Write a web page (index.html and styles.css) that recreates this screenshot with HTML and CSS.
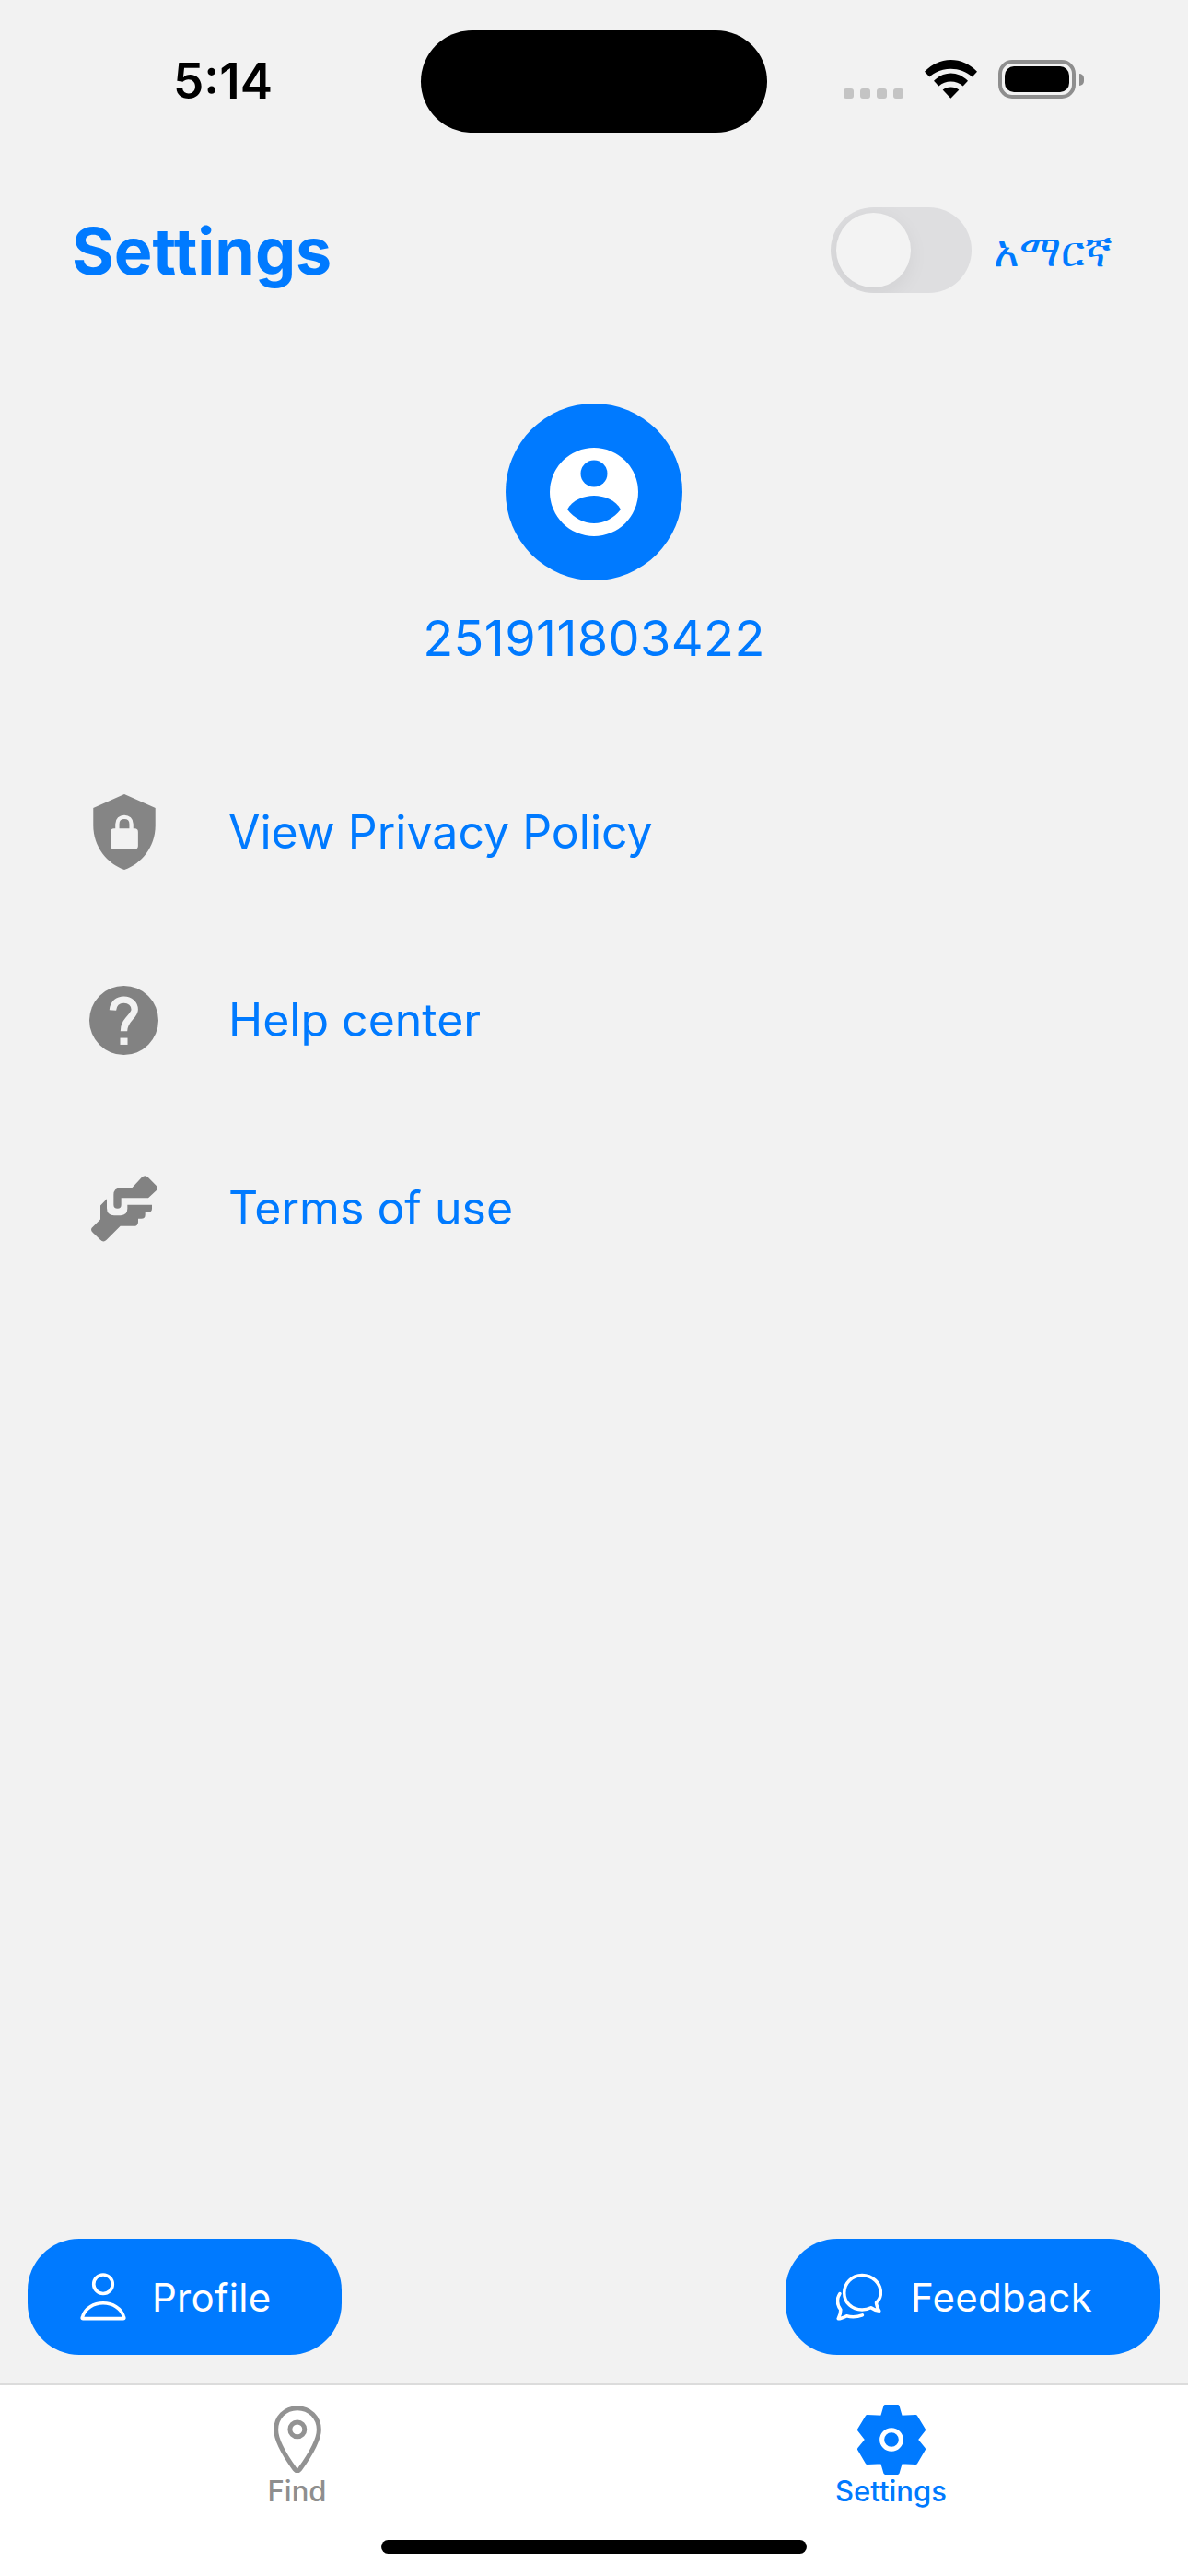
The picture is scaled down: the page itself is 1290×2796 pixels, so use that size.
FILE: index.html
```html
<!DOCTYPE html>
<html>
<head>
    <title>Settings</title>
    <link rel="stylesheet" href="styles.css">
</head>
<body>
    <div class="screen">
        <div class="status-bar">
            <span class="time">5:14</span>
            <div class="island"></div>
            <div class="status-icons">
                <div class="signal"><i></i><i></i><i></i><i></i></div>
                <svg class="wifi" viewBox="372 75 171 125">
                    <path d="M372 113C420 62 495 62 543 113L527 130C490 95 425 95 388 130Z"/>
                    <path d="M402 143C435 110 480 110 513 143L497 160C475 140 440 140 418 160Z"/>
                    <path d="M431 172C445 160 470 160 484 172L457 200Z"/>
                </svg>
                <div class="battery"><div class="battery-level"></div></div>
                <div class="battery-nub"></div>
            </div>
        </div>

        <div class="header">
            <h1 class="title">Settings</h1>
            <div class="lang">
                <div class="toggle"><div class="knob"></div></div>
                <span class="lang-label">አማርኛ</span>
            </div>
        </div>

        <div class="account">
            <svg class="avatar" viewBox="0 0 192 192">
                <circle cx="96" cy="96" r="96" fill="#007aff"/>
                <circle cx="96" cy="96" r="48" fill="#fff"/>
                <circle cx="96" cy="76" r="14.5" fill="#007aff"/>
                <path d="M67 115C72 105 85 100 96 100C107 100 120 105 125 115C118 124 107 130 96 130C85 130 74 124 67 115Z" fill="#007aff"/>
            </svg>
            <div class="phone">251911803422</div>
        </div>

        <div class="menu">
            <div class="menu-row">
                <div class="menu-icon">
                    <svg class="icon-shield" viewBox="123 92 204 248">
                        <path d="M225 92L327 137V195C327 265 280 322 225 340C170 322 123 265 123 195V137Z" fill="#858585"/>
                        <path d="M202 207V190C202 176 212 167 225 167C238 167 248 176 248 190V207" fill="none" stroke="#f2f2f2" stroke-width="13"/>
                        <rect x="180" y="205" width="90" height="67" rx="11" fill="#f2f2f2"/>
                    </svg>
                </div>
                <span class="menu-text">View Privacy Policy</span>
            </div>
            <div class="menu-row">
                <div class="menu-icon">
                    <svg class="icon-help" viewBox="113 86 224 224">
                        <circle cx="225" cy="198" r="112" fill="#828282"/>
                        <path d="M189 165C191 142 207 131 225 131C245 131 260 145 260 163C260 185 225 195 225 233" fill="none" stroke="#f2f2f2" stroke-width="22"/>
                        <rect x="213" y="255" width="24" height="22" fill="#f2f2f2"/>
                    </svg>
                </div>
                <span class="menu-text">Help center</span>
            </div>
            <div class="menu-row">
                <div class="menu-icon">
                    <svg class="icon-terms" viewBox="117 700 216 218" fill="#828282">
                        <path d="M250 742L282 708Q292 698 302 708L328 734Q338 744 328 752L303 775H215V798Q215 810 203 810Q190 810 190 798V765Q190 743 212 743Z"/>
                        <path d="M122 870L147 845V800L168 778V808Q168 832 192 832H213Q235 832 235 810V798H315V810Q315 822 303 822H293V830Q293 843 280 843H270V853Q270 867 255 867H212L167 912Q157 922 147 912L122 888Q112 878 122 870Z"/>
                    </svg>
                </div>
                <span class="menu-text">Terms of use</span>
            </div>
        </div>

        <div class="spacer"></div>

        <div class="actions">
            <div class="action action-profile">
                <svg class="action-icon" viewBox="260 200 146 157" fill="none" stroke="#fff" stroke-width="11">
                    <circle cx="333" cy="237" r="31"/>
                    <path d="M267 350C262 350 265 345 266 342C274 316 302 299 333 299C364 299 392 316 400 342C401 345 404 350 399 350Z" stroke-linejoin="round"/>
                </svg>
                <span>Profile</span>
            </div>
            <div class="action action-feedback">
                <svg class="action-icon" viewBox="235 200 155 157" fill="none" stroke="#fff" stroke-width="11" stroke-linejoin="round" stroke-linecap="round">
                    <path d="M322 206C288 206 262 232 262 265C262 298 288 322 322 322C333 322 344 319 352 315C362 322 372 325 380 326C374 316 370 306 370 298C380 288 385 277 385 265C385 232 357 206 322 206Z"/>
                    <path d="M247 268C236 285 238 305 250 322C250 333 247 343 242 352C252 352 262 347 270 343C285 347 305 347 323 340"/>
                </svg>
                <span>Feedback</span>
            </div>
        </div>

        <div class="tab-bar">
            <div class="tabs">
                <div class="tab">
                    <svg class="tab-icon-find" viewBox="888 633 157 220" fill="none" stroke="#929292" stroke-width="15">
                        <path d="M966 641C925 641 896 672 896 712C896 750 935 810 958 842Q966 852 974 842C997 810 1037 750 1037 712C1037 672 1007 641 966 641Z"/>
                        <circle cx="966" cy="711" r="24"/>
                    </svg>
                    <span class="tab-label">Find</span>
                </div>
                <div class="tab tab-active">
                    <svg class="tab-icon-gear" viewBox="300 630 222 228">
                        <path d="M391 636H431L441 671L490 669L516 712L491 744L516 775L490 819L441 817L431 852H391L381 817L332 819L306 775L331 744L306 712L332 669L381 671Z" fill="#007aff" stroke="#007aff" stroke-width="12" stroke-linejoin="round"/>
                        <circle cx="411" cy="744" r="31" fill="#007aff" stroke="#fff" stroke-width="15"/>
                    </svg>
                    <span class="tab-label">Settings</span>
                </div>
            </div>
            <div class="home-indicator"></div>
        </div>
    </div>
</body>
</html>
```

FILE: styles.css
```css
:root {
    --blue: #007aff;
    --page-bg: #f2f2f2;
}

* {
    box-sizing: border-box;
}

body {
    margin: 0;
    background: var(--page-bg);
    font-family: Inter, "Noto Sans", "DejaVu Sans", sans-serif;
}

.screen {
    position: relative;
    width: 1290px;
    height: 2796px;
    display: flex;
    flex-direction: column;
    overflow: hidden;
}

.status-bar {
    height: 144px;
    flex-shrink: 0;
    display: flex;
    justify-content: space-between;
    align-items: flex-end;
    padding: 0 113px 37px 188px;
}

.time {
    font-size: 53px;
    font-weight: 600;
    line-height: 37px;
    color: #000;
}

.island {
    position: absolute;
    left: 457px;
    top: 33px;
    width: 376px;
    height: 111px;
    background: #000;
    border-radius: 56px;
}

.status-icons {
    display: flex;
    align-items: flex-end;
}

.signal {
    display: flex;
    gap: 7px;
    margin-right: 23px;
}

.signal i {
    width: 11px;
    height: 11px;
    border-radius: 3px;
    background: #c4c4c4;
}

.wifi {
    display: block;
    width: 57px;
    height: 42px;
    margin-right: 23px;
}

.battery {
    width: 84px;
    height: 42px;
    padding: 3px;
    border: 4px solid #8e8e8e;
    border-radius: 15px;
}

.battery-level {
    height: 100%;
    background: #000;
    border-radius: 10px;
}

.battery-nub {
    width: 5px;
    height: 13px;
    margin: 0 0 14px 4px;
    background: #8e8e8e;
    border-radius: 0 6px 6px 0;
}

.header {
    height: 93px;
    margin-top: 81px;
    flex-shrink: 0;
    display: flex;
    justify-content: space-between;
    align-items: center;
    padding: 0 82px 0 78px;
}

.title {
    margin: 0;
    padding-top: 1px;
    font-size: 70px;
    font-weight: 700;
    color: var(--blue);
}

.lang {
    display: flex;
    align-items: center;
    gap: 24px;
}

.toggle {
    width: 153px;
    height: 93px;
    padding: 6px;
    background: #dedee0;
    border-radius: 47px;
    overflow: hidden;
}

.knob {
    width: 81px;
    height: 81px;
    background: #f3f3f3;
    border-radius: 50%;
    box-shadow: -3px 6px 24px rgba(0,0,0,0.07);
}

.lang-label {
    font-size: 47px;
    color: var(--blue);
}

.account {
    margin-top: 120px;
    flex-shrink: 0;
    display: flex;
    flex-direction: column;
    align-items: center;
}

.avatar {
    display: block;
    width: 192px;
    height: 192px;
}

.phone {
    margin-top: 30px;
    font-size: 54px;
    letter-spacing: 0.4px;
    color: var(--blue);
}

.menu {
    margin-top: 76px;
    display: flex;
    flex-direction: column;
}

.menu-row {
    height: 204px;
    display: flex;
    align-items: center;
    padding-left: 97px;
    gap: 76px;
}

.menu-icon {
    width: 75px;
    display: flex;
    justify-content: center;
}

.icon-shield {
    display: block;
    width: 68px;
    height: 82px;
}

.icon-help {
    display: block;
    width: 75px;
    height: 75px;
}

.icon-terms {
    display: block;
    width: 72px;
    height: 73px;
}

.menu-text {
    font-size: 50px;
    color: var(--blue);
}

.spacer {
    flex: 1;
}

.actions {
    display: flex;
    justify-content: space-between;
    padding: 0 30px;
    margin-bottom: 31px;
}

.action {
    height: 126px;
    display: flex;
    align-items: center;
    background: var(--blue);
    border-radius: 56px;
    color: #fff;
    font-size: 42px;
    letter-spacing: 0.3px;
}

.action-profile {
    width: 341px;
    padding-left: 57px;
    gap: 28px;
}

.action-feedback {
    width: 407px;
    padding-left: 55px;
    gap: 31px;
}

.action-icon {
    display: block;
    width: 50px;
    height: 52px;
    flex-shrink: 0;
}

.tab-bar {
    height: 209px;
    flex-shrink: 0;
    background: #fff;
    border-top: 2px solid #dcdcdc;
    display: flex;
    flex-direction: column;
}

.tabs {
    display: grid;
    grid-template-columns: 1fr 1fr;
    padding-top: 20px;
}

.tab {
    display: flex;
    flex-direction: column;
    align-items: center;
    height: 148px;
    color: #8e8e8e;
}

.tab-active {
    color: var(--blue);
}

.tab-icon-find {
    display: block;
    width: 52px;
    height: 73px;
    margin: 2px 0 3px;
}

.tab-icon-gear {
    display: block;
    width: 74px;
    height: 76px;
    margin: 1px 0;
}

.tab-label {
    font-size: 31px;
    font-weight: 500;
    line-height: 34px;
}

.home-indicator {
    width: 462px;
    height: 15px;
    margin: 0 auto;
    background: #000;
    border-radius: 8px;
}
```
